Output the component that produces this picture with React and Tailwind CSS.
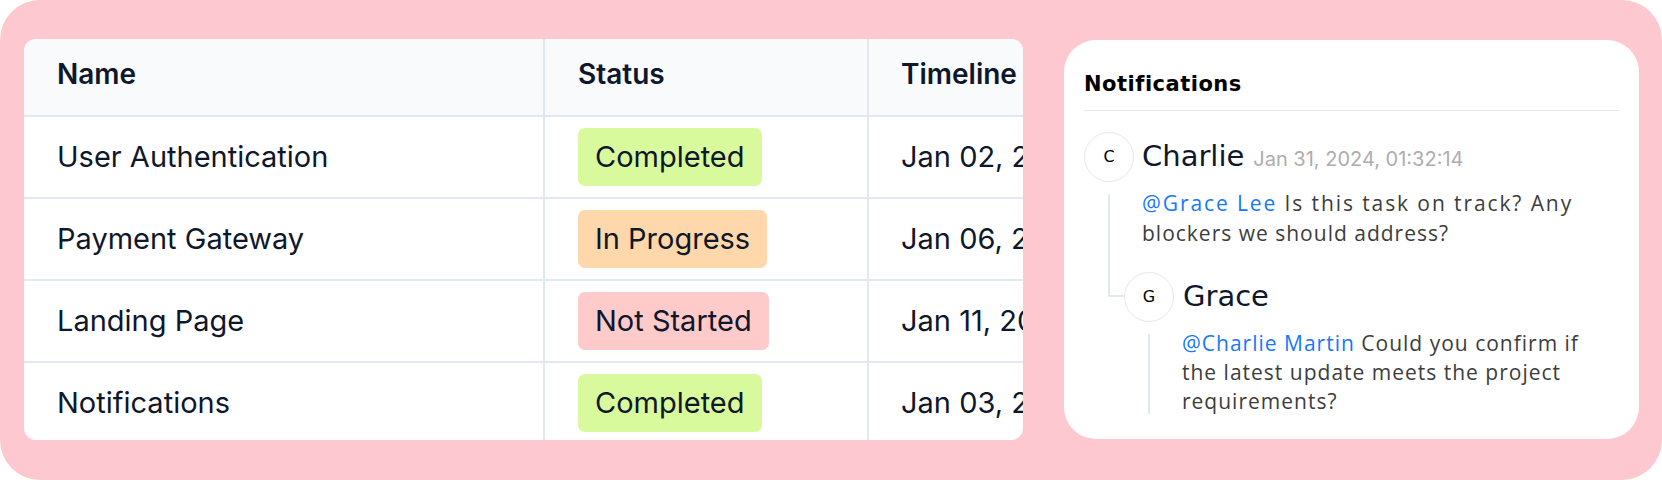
import React from 'react';

const rows = [
    { name: 'User Authentication', status: 'Completed', date: 'Jan 02, 2024 - Jan 10, 2024' },
    { name: 'Payment Gateway', status: 'In Progress', date: 'Jan 06, 2024 - Jan 20, 2024' },
    { name: 'Landing Page', status: 'Not Started', date: 'Jan 11, 2024 - Jan 25, 2024' },
    { name: 'Notifications', status: 'Completed', date: 'Jan 03, 2024 - Jan 12, 2024' }
];

const badgeColors = {
    'Completed': 'bg-[#d9f99d]',
    'In Progress': 'bg-[#fed7aa]',
    'Not Started': 'bg-[#fecaca]'
};

const StatusBadge = ({ status }) => (
    <span className={`inline-flex items-center h-[58px] px-[17px] rounded-[7px] ${badgeColors[status]}`}>
        {status}
    </span>
);

const TaskTable = () => {
    return (
        <div className="w-[999px] h-[401px] shrink-0 bg-white rounded-xl overflow-hidden text-[#0f172a] text-[29px] font-['Inter',sans-serif]">
            <div className="grid grid-cols-[521px_324px_400px] h-[78px] bg-[#f8fafc] border-b-2 border-[#e2e8f0] font-semibold text-[28px]">
                <div className="flex items-center pl-[33px] pb-[6px] border-r-2 border-[#e2e8f0]">Name</div>
                <div className="flex items-center pl-[33px] pb-[6px] border-r-2 border-[#e2e8f0]">Status</div>
                <div className="flex items-center pl-[32px] pb-[6px] whitespace-nowrap">Timeline</div>
            </div>
            {rows.map((row, i) => (
                <div
                    key={row.name + i}
                    className={`grid grid-cols-[521px_324px_400px] ${i < rows.length - 1 ? 'h-[82px] border-b-2 border-[#e2e8f0]' : 'h-[80px]'}`}
                >
                    <div className="flex items-center pl-[33px] border-r-2 border-[#e2e8f0]">{row.name}</div>
                    <div className="flex items-center pl-[33px] border-r-2 border-[#e2e8f0]">
                        <StatusBadge status={row.status} />
                    </div>
                    <div className="flex items-center pl-[32px] whitespace-nowrap">{row.date}</div>
                </div>
            ))}
        </div>
    );
};

const Avatar = ({ letter }) => (
    <div className="w-[50px] h-[50px] shrink-0 rounded-full border border-[#e5e7eb] bg-white flex items-center justify-center text-[16px] text-black">
        {letter}
    </div>
);

const Mention = ({ children }) => <span className="text-[#1677ff]">{children}</span>;

const NotificationsPanel = () => {
    return (
        <div className="w-[575px] h-[399px] mt-[1px] shrink-0 bg-white rounded-[32px] pt-[28px] px-5 font-['DejaVu_Sans',sans-serif]">
            <h2 className="text-[21px] leading-[33px] font-bold text-black pb-[9px] border-b border-[#e2e8f0] tracking-[0.5px]">
                Notifications
            </h2>

            <div className="mt-[21px]">
                <div className="flex items-center gap-2">
                    <Avatar letter="C" />
                    <div className="flex items-baseline gap-[9px]">
                        <span className="text-[29px] text-[#0f172a]">Charlie</span>
                        <span className="text-[20px] text-[#adadad] font-['Inter',sans-serif]">Jan 31, 2024, 01:32:14</span>
                    </div>
                </div>

                <div className="flex mt-[6px]">
                    <div className="w-[40px] shrink-0">
                        <div className="ml-[24px] mt-[6px] w-[16px] h-[103px] border-l-2 border-b-2 border-[#e2e8f0] rounded-bl-[2px]" />
                    </div>
                    <div>
                        <p className="pl-[18px] font-['Open_Sans',sans-serif] text-[21px] leading-[30px] tracking-[1px] text-[#3d3d3d] whitespace-nowrap">
                            <span className="tracking-[1.9px]">
                                <Mention>@Grace Lee</Mention> Is this task on track? Any
                            </span>
                            <br />
                            blockers we should address?
                        </p>

                        <div className="mt-[24px]">
                            <div className="flex items-center gap-[9px]">
                                <Avatar letter="G" />
                                <span className="text-[29px] text-[#0f172a]">Grace</span>
                            </div>
                            <div className="flex mt-[7px]">
                                <div className="w-[58px] shrink-0">
                                    <div className="ml-[24px] mt-[5px] w-[2px] h-[80px] bg-[#e2e8f0]" />
                                </div>
                                <p className="font-['Open_Sans',sans-serif] text-[21px] leading-[29px] tracking-[1px] text-[#3d3d3d] whitespace-nowrap">
                                    <Mention>@Charlie Martin</Mention> Could you confirm if
                                    <br />
                                    the latest update meets the project
                                    <br />
                                    requirements?
                                </p>
                            </div>
                        </div>
                    </div>
                </div>
            </div>
        </div>
    );
};

const App = () => {
    return (
        <div className="w-[1662px] h-[480px] bg-white">
            <div className="w-[1662px] h-[480px] bg-[#fec8d1] rounded-[40px] flex items-start pl-[24px] pt-[39px] gap-[41px]">
                <TaskTable />
                <NotificationsPanel />
            </div>
        </div>
    );
};

export default App;
